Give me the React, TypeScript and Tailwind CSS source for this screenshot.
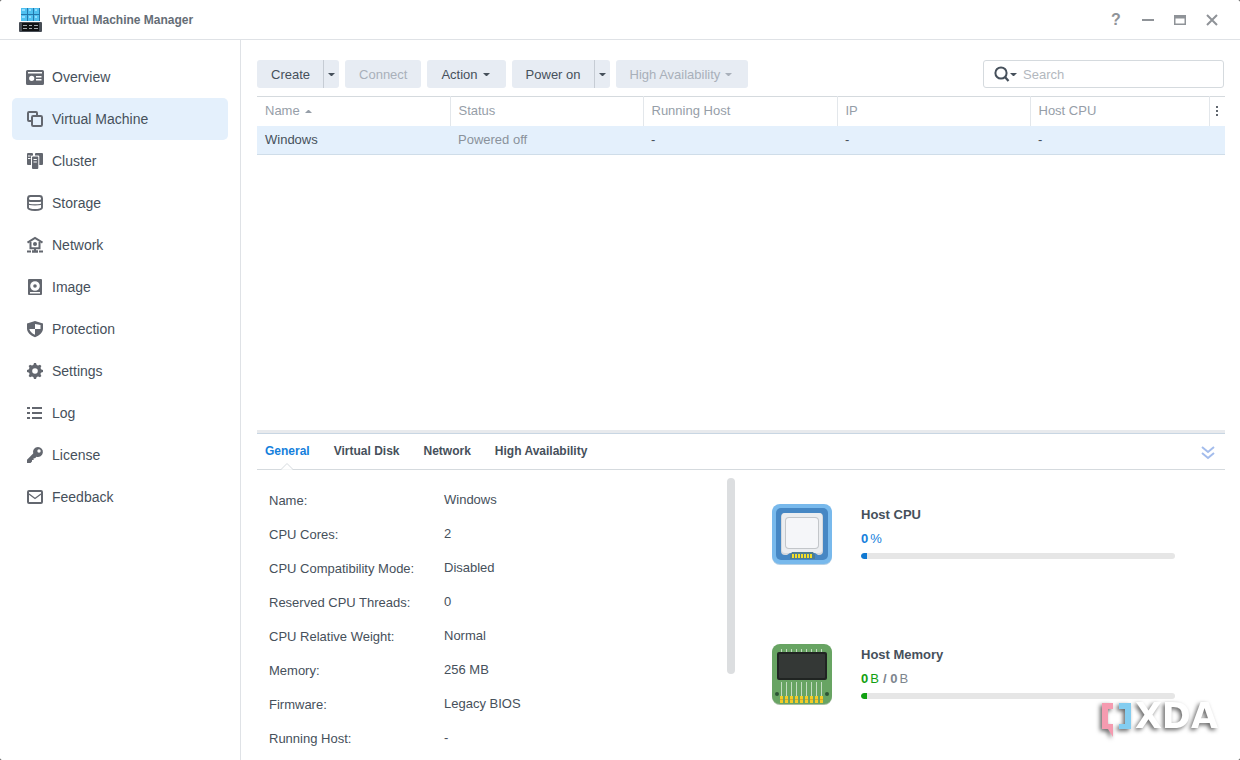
import { useState } from "react";
import type { ReactNode } from "react";
import clsx from "clsx";

interface INavItem {
  label: string;
  icon: ReactNode;
}

const OverviewIcon = () => (
  <svg width="18" height="18" viewBox="0 0 18 18" fill="currentColor">
    <path
      fillRule="evenodd"
      d="M1.500 2h15A1.500 1.500 0 0 1 18 3.500V15.500A1.500 1.500 0 0 1 16.500 17h-15A1.500 1.500 0 0 1 0 15.500V3.500A1.500 1.500 0 0 1 1.500 2ZM2 4v1.500h14V4ZM5.700 7.700a2.600 2.600 0 1 0 0 5.200a2.600 2.600 0 0 0 0-5.200ZM10 8v1.500h5.500V8ZM10 11v1.500h5.500V11Z"
    />
  </svg>
);

const MachineIcon = () => (
  <svg width="18" height="18" viewBox="0 0 18 18" fill="none" stroke="currentColor" strokeWidth="2">
    <path d="M5.500 11H3a1 1 0 0 1-1-1V3a1 1 0 0 1 1-1h7a1 1 0 0 1 1 1v2.500" />
    <rect x="6" y="6" width="10" height="10" rx="1.200" />
  </svg>
);

const ClusterIcon = () => (
  <svg width="18" height="18" viewBox="0 0 18 18" fill="currentColor">
    <path
      fillRule="evenodd"
      d="M2 1h4a1 1 0 0 1 1 1v1.500H6a1 1 0 0 0-1 1V13H2a1 1 0 0 1-1-1V2a1 1 0 0 1 1-1ZM2 3.500v1h2.500v-1ZM2 6v1h2.500V6Z"
    />
    <path
      fillRule="evenodd"
      d="M7 4.500h4.300a1 1 0 0 1 1 1V16a1 1 0 0 1-1 1H7a1 1 0 0 1-1-1V5.500a1 1 0 0 1 1-1ZM7.500 7v1h3.300V7ZM7.500 9.500v1h3.300v-1Z"
    />
    <path d="M10 1h6a1 1 0 0 1 1 1v10a1 1 0 0 1-1 1h-2.700V4.500a1 1 0 0 0-1-1H9V2a1 1 0 0 1 1-1Z" />
  </svg>
);

const StorageIcon = () => (
  <svg width="18" height="18" viewBox="0 0 18 18" fill="none" stroke="currentColor" strokeWidth="1.900">
    <rect x="2" y="2" width="14" height="5" rx="2.500" />
    <path d="M2 4.300v9.200c0 1.400 3.200 2.500 7 2.500s7-1.100 7-2.500V4.300" />
    <path d="M2 9.300c0 1 3.200 1.600 7 1.600s7-.600 7-1.600" strokeWidth="1.200" />
  </svg>
);

const NetworkIcon = () => (
  <svg width="18" height="18" viewBox="0 0 18 18">
    <path d="M1.500 6.600 9 2l7.500 4.600" fill="none" stroke="currentColor" strokeWidth="2" />
    <path d="M4.500 6v6.200h9V6" fill="none" stroke="currentColor" strokeWidth="2" />
    <circle cx="9" cy="8" r="2" fill="currentColor" />
    <path d="M8 12h2v2.200h2v2.600H6v-2.600h2ZM1 14.600h4v1.800H1ZM13 14.600h4v1.800h-4Z" fill="currentColor" />
  </svg>
);

const ImageIcon = () => (
  <svg width="18" height="18" viewBox="0 0 18 18" fill="currentColor">
    <path
      fillRule="evenodd"
      d="M3 1h12a1 1 0 0 1 1 1v14a1 1 0 0 1-1 1H3a1 1 0 0 1-1-1V2a1 1 0 0 1 1-1ZM9 3.200a4.800 4.800 0 1 0 0 9.600a4.800 4.800 0 0 0 0-9.600ZM4 14v1.400h10V14Z"
    />
    <circle cx="9" cy="8" r="1.800" />
  </svg>
);

const ProtectionIcon = () => (
  <svg width="18" height="18" viewBox="0 0 18 18" fill="currentColor">
    <path
      fillRule="evenodd"
      d="M9 1 17 3.600V8.500c0 4-3.600 7-8 8.700C4.600 15.500 1 12.500 1 8.500V3.600ZM9 4V9H3.300c.600 2.600 2.700 4.500 5.700 5.700V9h5.500V4.900L9 4Z"
    />
  </svg>
);

const SettingsIcon = () => (
  <svg width="18" height="18" viewBox="0 0 18 18">
    <g fill="currentColor">
      <path d="M7 4 8 1h2l1 3v10l-1 3H8l-1-3Z" />
      <path d="M7 4 8 1h2l1 3v10l-1 3H8l-1-3Z" transform="rotate(45 9 9)" />
      <path d="M7 4 8 1h2l1 3v10l-1 3H8l-1-3Z" transform="rotate(90 9 9)" />
      <path d="M7 4 8 1h2l1 3v10l-1 3H8l-1-3Z" transform="rotate(135 9 9)" />
      <circle cx="9" cy="9" r="6.200" />
    </g>
    <circle cx="9" cy="9" r="2.800" fill="#fff" />
  </svg>
);

const LogIcon = () => (
  <svg width="18" height="18" viewBox="0 0 18 18" fill="currentColor">
    <path d="M1 3h3v2H1ZM6 3h10v2H6ZM1 8h3v2H1ZM6 8h10v2H6ZM1 13h3v2H1ZM6 13h10v2H6Z" />
  </svg>
);

const LicenseIcon = () => (
  <svg width="18" height="18" viewBox="0 0 18 18" fill="currentColor">
    <path
      fillRule="evenodd"
      d="M12 1a5 5 0 1 1-1.500 9.800L9 12.300H7.600v1.600H6v1.600L4.500 17H1v-3.300l6.200-6.200A5 5 0 0 1 12 1ZM13 3.300a1.700 1.700 0 1 0 0 3.400a1.700 1.700 0 0 0 0-3.400Z"
    />
  </svg>
);

const FeedbackIcon = () => (
  <svg width="18" height="18" viewBox="0 0 18 18" fill="none" stroke="currentColor">
    <rect x="2" y="3" width="14" height="12" rx="1" strokeWidth="2" />
    <path d="m3 6 6 4.500L15 6" strokeWidth="1.300" />
  </svg>
);

const navItems: INavItem[] = [
  { label: "Overview", icon: <OverviewIcon /> },
  { label: "Virtual Machine", icon: <MachineIcon /> },
  { label: "Cluster", icon: <ClusterIcon /> },
  { label: "Storage", icon: <StorageIcon /> },
  { label: "Network", icon: <NetworkIcon /> },
  { label: "Image", icon: <ImageIcon /> },
  { label: "Protection", icon: <ProtectionIcon /> },
  { label: "Settings", icon: <SettingsIcon /> },
  { label: "Log", icon: <LogIcon /> },
  { label: "License", icon: <LicenseIcon /> },
  { label: "Feedback", icon: <FeedbackIcon /> },
];

const columns = ["Name", "Status", "Running Host", "IP", "Host CPU"];

const tabs = ["General", "Virtual Disk", "Network", "High Availability"];

const details = [
  { label: "Name:", value: "Windows" },
  { label: "CPU Cores:", value: "2" },
  { label: "CPU Compatibility Mode:", value: "Disabled" },
  { label: "Reserved CPU Threads:", value: "0" },
  { label: "CPU Relative Weight:", value: "Normal" },
  { label: "Memory:", value: "256 MB" },
  { label: "Firmware:", value: "Legacy BIOS" },
  { label: "Running Host:", value: "-" },
];

const Caret = () => (
  <svg width="7" height="3" viewBox="0 0 7 3" fill="currentColor">
    <path d="M0 0h7L4 3H3Z" />
  </svg>
);

const AppLogo = () => (
  <svg width="24" height="24" viewBox="0 0 24 24">
    <path d="M2 0h19v13H2Z" fill="#2478ad" />
    <g fill="#4fc0f0">
      <rect x="2" y="0" width="6" height="6" />
      <rect x="9" y="0" width="5" height="6" />
      <rect x="15" y="0" width="5" height="6" />
      <rect x="2" y="7" width="6" height="6" />
      <rect x="9" y="7" width="5" height="6" />
      <rect x="15" y="7" width="5" height="6" />
    </g>
    <path d="M3 1h3v2H3ZM10 1h2v2h-2ZM16 1h2v2h-2ZM3 8h3v2H3ZM10 8h2v2h-2ZM16 8h2v2h-2Z" fill="#8fdcff" />
    <rect x="0" y="14" width="23" height="10" rx="1" fill="#474d55" />
    <rect x="3" y="15" width="17" height="8" fill="#101214" />
    <path
      d="M4 17.500h4M10 17.500h3M15 17.500h4M4 20.500h4M10 20.500h3M15 20.500h4"
      stroke="#a5adb1"
      strokeWidth="1"
    />
  </svg>
);

const CpuIcon = () => (
  <svg width="60" height="62" viewBox="0 0 60 62">
    <rect x="0" y="1" width="60" height="60" rx="8" fill="#b4cfe5" />
    <rect x="0" y="0" width="60" height="60" rx="8" fill="#78b9ec" />
    <rect x="4" y="4" width="52" height="52" rx="5" fill="#4687c4" />
    <path
      d="M13 9h34a4 4 0 0 1 4 4v34a4 4 0 0 1-4 4h-1l-3-2H18l-3 2h-2a4 4 0 0 1-4-4V13a4 4 0 0 1 4-4Z"
      fill="#d5d8dc"
    />
    <path
      d="M13 9h34a3 3 0 0 1 3 3v34a3 3 0 0 1-3 3H13a3 3 0 0 1-3-3V12a3 3 0 0 1 3-3Z"
      fill="#ebedf0"
    />
    <rect x="13" y="13" width="34" height="32" rx="4" fill="#c3c6ca" />
    <rect x="14" y="14" width="32" height="30" rx="3" fill="#f5f6f9" />
    <path d="M20 48h21l2 3v4H18v-4Z" fill="#4d7d92" />
    <path
      d="M20 50h2v4h-2ZM23 50h2v4h-2ZM26 50h2v4h-2ZM29 50h2v4h-2ZM32 50h2v4h-2ZM35 50h2v4h-2ZM38 50h2v4h-2Z"
      fill="#f2dc28"
    />
  </svg>
);

const pins = [9, 14, 19, 24, 29, 34, 39, 44, 49];

const MemoryIcon = () => (
  <svg width="60" height="62" viewBox="0 0 60 62">
    <rect x="0" y="1" width="60" height="60" rx="8" fill="#a6bda2" />
    <rect x="0" y="0" width="60" height="60" rx="8" fill="#68a463" />
    {pins.map((x) => (
      <g key={x}>
        <path d={`M${x + 0.5} 5v3M${x + 0.5} 38v14`} stroke="#c3dbc1" />
        <rect x={x - 1} y="52" width="3" height="7" fill="#f3cb27" />
        <rect x={x - 1} y="55" width="3" height="1" fill="#d9a622" />
      </g>
    ))}
    <rect x="5" y="8" width="50" height="28" rx="2" fill="#202422" />
    <rect x="7" y="10" width="46" height="24" rx="1" fill="#343836" />
    <circle cx="5" cy="50" r="2" fill="#2d5536" />
    <circle cx="55" cy="50" r="2" fill="#2d5536" />
  </svg>
);

const Watermark = () => (
  <div className="pointer-events-none absolute right-[22px] bottom-5 flex items-start drop-shadow-[-2px_2px_2px_rgba(0,0,0,0.6)]">
    <svg width="34" height="38" viewBox="0 0 34 38">
      <path d="M1 1h11v6H7v15h5v13l-5-8H1Z" fill="#f59bb0" />
      <path d="M18 1h12v26H18v-5h6V7h-6Z" fill="#83cdf0" />
    </svg>
    <span className="font-['DejaVu_Sans',sans-serif] text-[35px] leading-7 font-bold text-white">
      XDA
    </span>
  </div>
);

interface ToolButtonProps {
  label: string;
  caret?: boolean;
  disabled?: boolean;
}

const ToolButton = ({ label, caret, disabled }: ToolButtonProps) => (
  <button
    disabled={disabled}
    className={clsx(
      "flex h-7 items-center gap-[5px] rounded-[3px] bg-[#e7ecf3] pt-px pl-3.5",
      caret ? "pr-4" : "pr-3.5",
      disabled ? "text-[#a9b0ba]" : "cursor-pointer"
    )}
  >
    {label}
    {caret && <Caret />}
  </button>
);

const SplitButton = ({ label }: { label: string }) => (
  <div className="flex h-7 rounded-[3px] bg-[#e7ecf3]">
    <button className="cursor-pointer border-r border-[#c6ccd4] pt-px pr-[13px] pl-3.5">{label}</button>
    <button
      aria-label={`${label} options`}
      className="flex w-[15px] cursor-pointer items-center justify-center"
    >
      <Caret />
    </button>
  </div>
);

interface UsageProps {
  title: string;
  icon: ReactNode;
  fill: string;
  children: ReactNode;
}

const Usage = ({ title, icon, fill, children }: UsageProps) => (
  <section className="flex items-start gap-[29px]">
    <div className="shrink-0">{icon}</div>
    <div className="flex flex-1 flex-col gap-1 pt-px">
      <h3 className="font-bold">{title}</h3>
      <p className="flex gap-0.5">{children}</p>
      <div className="h-1.5 overflow-hidden rounded-full bg-[#e6e6e6]">
        <div className={clsx("h-full w-1.5 rounded-l-full", fill)} />
      </div>
    </div>
  </section>
);

const App = () => {
  const [page, setPage] = useState<string>("Virtual Machine");
  const [tab, setTab] = useState<string>("General");

  return (
    <div className="bg-[#3a3a3a]">
      <div className="relative flex min-h-screen flex-col rounded-[2px] bg-white font-['Liberation_Sans',Arial,sans-serif] text-[13px] leading-5 text-[#46505b]">
        <header className="flex h-10 items-center border-b border-[#dfe2e6] pr-5 pl-[19px]">
          <AppLogo />
          <h1 className="ml-[9px] text-xs font-bold text-[#656d76]">Virtual Machine Manager</h1>
          <div className="ml-auto flex items-center gap-4 text-[#8f9398]">
            <button aria-label="Help" className="w-4 cursor-pointer text-base leading-4 font-bold">
              ?
            </button>
            <button aria-label="Minimize" className="cursor-pointer">
              <svg width="16" height="16" viewBox="0 0 16 16" fill="currentColor">
                <path d="M2 7h12v2H2Z" />
              </svg>
            </button>
            <button aria-label="Maximize" className="cursor-pointer">
              <svg width="16" height="16" viewBox="0 0 16 16" fill="currentColor">
                <path fillRule="evenodd" d="M2 3h12v10H2ZM3.500 6.500v5h9v-5Z" />
              </svg>
            </button>
            <button aria-label="Close" className="cursor-pointer">
              <svg width="16" height="16" viewBox="0 0 16 16" fill="none" stroke="currentColor" strokeWidth="2">
                <path d="m3 3 10 10M13 3 3 13" />
              </svg>
            </button>
          </div>
        </header>

        <div className="flex flex-1">
          <nav className="w-[241px] shrink-0 border-r border-[#dfe2e6] px-3 pt-4 text-sm">
            {navItems.map((item) => (
              <button
                key={item.label}
                onClick={() => setPage(item.label)}
                className={clsx(
                  "flex h-[42px] w-full cursor-pointer items-center gap-2 rounded-[5px] pl-3.5",
                  page === item.label && "bg-[#e4f0fc]"
                )}
              >
                <span className="text-[#63676f]">{item.icon}</span>
                {item.label}
              </button>
            ))}
          </nav>

          <main className="flex min-w-0 flex-1 flex-col pt-5 pr-[15px] pl-4">
            <div className="mb-2 flex gap-1.5 pr-px">
              <SplitButton label="Create" />
              <ToolButton label="Connect" disabled />
              <ToolButton label="Action" caret />
              <SplitButton label="Power on" />
              <ToolButton label="High Availability" caret disabled />
              <div className="ml-auto flex h-7 w-[241px] items-center rounded-[3px] border border-[#d5dade] pl-2.5">
                <button aria-label="Search filter" className="flex cursor-pointer items-center">
                  <svg width="16" height="16" viewBox="0 0 16 16" fill="none" stroke="currentColor">
                    <circle cx="7" cy="7" r="5.600" strokeWidth="2" />
                    <path d="m11 11 3.500 4" strokeWidth="2.200" />
                  </svg>
                  <Caret />
                </button>
                <input
                  type="text"
                  aria-label="Search"
                  placeholder="Search"
                  className="ml-1.5 w-full min-w-0 pt-px outline-none placeholder:text-[#b3b8be]"
                />
              </div>
            </div>

            <div className="flex-1">
              <table className="w-full table-fixed border-t border-[#d5dade] text-left">
                <colgroup>
                  <col className="w-[193px]" />
                  <col className="w-[193px]" />
                  <col className="w-[194px]" />
                  <col className="w-[193px]" />
                  <col className="w-[179px]" />
                  <col className="w-4" />
                </colgroup>
                <thead>
                  <tr className="h-[29px] text-[#969ea8]">
                    {columns.map((column) => (
                      <th key={column} className="border-r border-[#e3e7eb] px-2 font-normal">
                        <span className="flex items-center gap-[5px]">
                          {column}
                          {column === "Name" && (
                            <svg width="7" height="3" viewBox="0 0 7 3" fill="currentColor">
                              <path d="M0 3h7L4 0H3Z" />
                            </svg>
                          )}
                        </span>
                      </th>
                    ))}
                    <th>
                      <button aria-label="Choose columns" className="flex w-full cursor-pointer justify-center">
                        <svg width="2" height="10" viewBox="0 0 2 10" fill="#60666e">
                          <path d="M0 0h2v2H0ZM0 4h2v2H0ZM0 8h2v2H0Z" />
                        </svg>
                      </button>
                    </th>
                  </tr>
                </thead>
                <tbody>
                  <tr className="h-[29px] border-b border-[#cfdde9] bg-[#e4f0fc]">
                    <td className="px-2 pt-px">Windows</td>
                    <td className="px-2 pt-px text-[#8a929b]">Powered off</td>
                    <td className="px-2 pt-px">-</td>
                    <td className="px-2 pt-px">-</td>
                    <td className="px-2 pt-px">-</td>
                    <td />
                  </tr>
                </tbody>
              </table>
            </div>

            <div className="h-1 border-b border-[#c8d6e3] bg-[#e8eaed]" />
            <div className="flex h-9 items-center justify-between border-b border-[#d5dade] px-2">
              <div role="tablist" className="flex h-9 gap-6 text-xs font-bold">
                {tabs.map((name) => (
                  <button
                    key={name}
                    role="tab"
                    aria-selected={tab === name}
                    onClick={() => setTab(name)}
                    className={clsx("relative cursor-pointer pb-0.5", tab === name && "text-[#1480dc]")}
                  >
                    {name}
                    {tab === name && (
                      <svg
                        width="14"
                        height="8"
                        viewBox="0 0 14 8"
                        className="absolute bottom-0 left-1/2 -translate-x-1/2"
                      >
                        <path d="M1 7.500 7 1.500l6 6" fill="#fff" stroke="#d5dade" />
                        <path d="M2 8h10" stroke="#fff" />
                      </svg>
                    )}
                  </button>
                ))}
              </div>
              <button aria-label="Collapse details" className="cursor-pointer text-[#a3bcec]">
                <svg width="18" height="16" viewBox="0 0 18 16" fill="none" stroke="currentColor" strokeWidth="2">
                  <path d="m3 3 6 5 6-5M3 9l6 5 6-5" />
                </svg>
              </button>
            </div>

            <div className="grid grid-cols-2">
              <div className="flex pr-1.5">
                <dl className="flex-1 pt-3.5 pb-1 pl-3">
                  {details.map((row) => (
                    <div key={row.label} className="flex h-[34px] items-center">
                      <dt className="w-[175px]">{row.label}</dt>
                      <dd className="pb-0.5">{row.value}</dd>
                    </div>
                  ))}
                </dl>
                <div className="mt-2 h-49 w-2 rounded-full bg-[#dcdee0]" />
              </div>

              <div className="flex flex-col gap-[78px] pt-[34px] pr-[50px] pl-[31px]">
                <Usage title="Host CPU" icon={<CpuIcon />} fill="bg-[#1079d2]">
                  <b className="text-[#1480dc]">0</b>
                  <span className="text-[#1480dc]">%</span>
                </Usage>
                <Usage title="Host Memory" icon={<MemoryIcon />} fill="bg-[#11a011]">
                  <b className="text-[#11a011]">0</b>
                  <span className="text-[#11a011]">B</span>
                  <b className="pl-0.5 text-[#7d858e]">/ 0</b>
                  <span className="text-[#7d858e]">B</span>
                </Usage>
              </div>
            </div>
          </main>
        </div>

        <Watermark />
      </div>
    </div>
  );
};

export default App;
